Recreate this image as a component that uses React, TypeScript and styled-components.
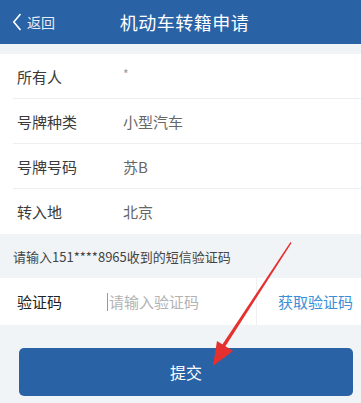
import styled, { createGlobalStyle } from "styled-components";

const Global = createGlobalStyle`
  html, body { margin: 0; padding: 0; background: #f1f4f6; }
  body { font-family: "Noto Sans CJK SC", "Noto Sans", sans-serif; }
`;

const Page = styled.div`
  position: relative;
  width: 361px;
  height: 403px;
  overflow: hidden;
  background: #f1f4f6;
`;

const Header = styled.div`
  height: 44px;
  background: #2a62a6;
  display: flex;
  align-items: center;
  position: relative;
  color: #fff;
`;

const Back = styled.div`
  display: flex;
  align-items: center;
  gap: 5px;
  padding-left: 12px;
  font-size: 14px;
  color: #e8eef7;
`;

const Title = styled.div`
  position: absolute;
  left: 8px;
  right: 0;
  text-align: center;
  font-size: 18px;
  letter-spacing: 0.5px;
  pointer-events: none;
`;

const List = styled.div`
  margin-top: 10px;
  background: #fff;
`;

const Row = styled.div<{ $last?: boolean }>`
  height: 45px;
  display: flex;
  align-items: center;
  padding-left: 17px;
  position: relative;
  &::after {
    content: "";
    display: ${(p) => (p.$last ? "none" : "block")};
    position: absolute;
    left: 13px;
    right: 0;
    bottom: 0;
    height: 1px;
    background: #eceef0;
  }
`;

const Label = styled.span`
  width: 106px;
  font-size: 15px;
  color: #3a3a3a;
`;

const Value = styled.span<{ $mask?: boolean }>`
  font-size: ${(p) => (p.$mask ? "12px" : "15px")};
  color: ${(p) => (p.$mask ? "#999" : "#666")};
  margin-top: ${(p) => (p.$mask ? "-6px" : "0")};
`;

const Hint = styled.div`
  height: 44px;
  display: flex;
  align-items: center;
  padding-left: 13px;
  font-size: 13px;
  color: #444;
`;

const CodeRow = styled.div`
  height: 47px;
  background: #fff;
  display: flex;
  align-items: center;
  padding-left: 17px;
`;

const CodeLabel = styled.span`
  width: 90px;
  font-size: 15px;
  color: #222;
`;

const InputWrap = styled.div`
  flex: 1;
  display: flex;
  align-items: center;
  height: 100%;
  border-right: 1px solid #eef0f2;
`;

const Caret = styled.span`
  width: 1px;
  height: 18px;
  background: #999;
  margin-right: 1px;
`;

const Input = styled.input`
  border: none;
  outline: none;
  width: 140px;
  padding: 0;
  font-family: inherit;
  font-size: 15px;
  color: #333;
  background: transparent;
  &::placeholder { color: #b3b3b3; }
`;

const GetCode = styled.span`
  padding: 0 8px 0 21px;
  font-size: 15px;
  color: #3b8fd6;
`;

const Footer = styled.div`
  padding: 23px 8px 0 19px;
`;

const Submit = styled.button`
  width: 100%;
  height: 48px;
  border: none;
  border-radius: 5px;
  background: #2a62a6;
  color: #fff;
  font-family: inherit;
  font-size: 16px;
`;

const Arrow = styled.svg`
  position: absolute;
  left: 0;
  top: 0;
  pointer-events: none;
`;

const rows = [
  { label: "所有人", value: "*" },
  { label: "号牌种类", value: "小型汽车" },
  { label: "号牌号码", value: "苏B" },
  { label: "转入地", value: "北京" },
];

export default function App() {
  return (
    <Page>
      <Global />
      <Header>
        <Back>
          <svg width="10" height="20" viewBox="0 0 10 20">
            <path d="M8.5 2 L1.8 10 L8.5 18" fill="none" stroke="#fff" strokeWidth="1.6" />
          </svg>
          返回
        </Back>
        <Title>机动车转籍申请</Title>
      </Header>
      <List>
        {rows.map((r, i) => (
          <Row key={r.label} $last={i === rows.length - 1}>
            <Label>{r.label}</Label>
            <Value $mask={r.value === "*"}>{r.value}</Value>
          </Row>
        ))}
      </List>
      <Hint>请输入151****8965收到的短信验证码</Hint>
      <CodeRow>
        <CodeLabel>验证码</CodeLabel>
        <InputWrap>
          <Caret />
          <Input placeholder="请输入验证码" />
        </InputWrap>
        <GetCode>获取验证码</GetCode>
      </CodeRow>
      <Footer>
        <Submit>提交</Submit>
      </Footer>
      <Arrow width="361" height="403" viewBox="0 0 361 403">
        <polygon points="290.5,242 291.5,243 223,350 220,348" fill="#e53030" />
        <polygon points="213,366 217,341 233,351" fill="#e53030" />
      </Arrow>
    </Page>
  );
}
